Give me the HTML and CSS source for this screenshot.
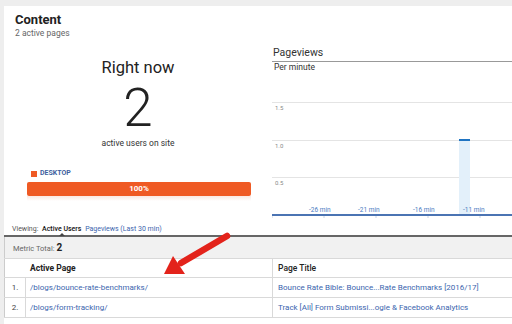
FILE: index.html
```html
<!DOCTYPE html>
<html lang="en">
<head>
    <meta charset="UTF-8">
    <title>Content - Real-Time</title>
    <link rel="stylesheet" href="styles.css">
</head>
<body>

<div class="card">
    <div class="top">
        <!-- Left: right now counter -->
        <div class="left">
            <div class="head">
                <h1>Content</h1>
                <div class="sub">2 active pages</div>
            </div>
            <div class="now">
                <div class="now-title">Right now</div>
                <div class="now-num">2</div>
                <div class="now-cap">active users on site</div>
            </div>
            <div class="device">
                <div class="legend"><span class="swatch"></span>DESKTOP</div>
                <div class="bar">100%</div>
                <div class="bar-shadow"></div>
            </div>
        </div>

        <!-- Right: pageviews chart -->
        <div class="chart">
            <div class="chart-title">Pageviews</div>
            <div class="chart-sub">Per minute</div>
            <svg class="plot" width="240" height="144" viewBox="0 0 240 144">
                <line x1="0" y1="25.5" x2="240" y2="25.5" stroke="#e4e4e4"/>
                <line x1="0" y1="63.5" x2="240" y2="63.5" stroke="#e4e4e4"/>
                <line x1="0" y1="100.5" x2="240" y2="100.5" stroke="#e4e4e4"/>
                <text x="3" y="33" class="ylab">1.5</text>
                <text x="3" y="71" class="ylab">1.0</text>
                <text x="3" y="108" class="ylab">0.5</text>
                <rect x="187" y="62" width="11" height="77" fill="#e3f0fa"/>
                <rect x="187" y="62" width="11" height="2" fill="#1f74c2"/>
                <rect x="0" y="137" width="240" height="2" fill="#4b74b3"/>
                <path d="M0 139v2M52 139v2M104 139v2M156 139v2M208 139v2" stroke="#c8d4e6"/>
                <text x="37" y="135" class="xlab">-26 min</text>
                <text x="86" y="135" class="xlab">-21 min</text>
                <text x="141" y="135" class="xlab">-16 min</text>
                <text x="191" y="135" class="xlab">-11 min</text>
            </svg>
        </div>
    </div>

    <div class="viewing">
        <span class="muted">Viewing:</span>
        <span class="active">Active Users</span>
        <span class="link">Pageviews (Last 30 min)</span>
    </div>

    <table class="pages">
        <tr class="total">
            <td colspan="3">Metric Total: <b>2</b></td>
        </tr>
        <tr class="th">
            <td class="idx"></td>
            <td class="page">Active Page</td>
            <td class="title">Page Title</td>
        </tr>
        <tr>
            <td class="idx">1.</td>
            <td class="page"><span class="link">/blogs/bounce-rate-benchmarks/</span></td>
            <td class="title"><span class="link">Bounce Rate Bible: Bounce...Rate Benchmarks [2016/17]</span></td>
        </tr>
        <tr>
            <td class="idx">2.</td>
            <td class="page"><span class="link">/blogs/form-tracking/</span></td>
            <td class="title"><span class="link">Track [All] Form Submissi...ogle &amp; Facebook Analytics</span></td>
        </tr>
    </table>

    <!-- annotation arrow -->
    <svg class="arrow" width="90" height="60" viewBox="150 222 90 60">
        <line x1="227" y1="236" x2="181" y2="263" stroke="#e3231b" stroke-width="6.5" stroke-linecap="round"/>
        <polygon points="164,274 173,256 185,274" fill="#e3231b"/>
    </svg>
</div>

</body>
</html>
```

FILE: styles.css
```css
body {
    margin: 0;
    background: #eeeeee;
    font-family: Roboto, "Liberation Sans", sans-serif;
    color: #222;
}
.card {
    position: relative;
    margin: 6px 0 0 4px;
    height: 318px;
    background: #fff;
    overflow: hidden;
}
.top {
    display: flex;
    height: 214px;
}
.left {
    width: 268px;
}
.head {
    padding: 6px 11px 0;
}
h1 {
    margin: 0;
    font-size: 13px;
    line-height: 16px;
    font-weight: 700;
}
.sub {
    font-size: 8.5px;
    color: #666;
    line-height: 11px;
}
.now {
    text-align: center;
    padding-top: 18px;
}
.now-title {
    font-size: 16.5px;
    font-weight: 400;
    line-height: 22px;
}
.now-num {
    font-size: 53px;
    font-weight: 300;
    line-height: 50px;
    margin-top: 4px;
}
.now-cap {
    font-size: 8.5px;
    line-height: 12px;
    color: #333;
    margin-top: 4px;
}
.device {
    padding: 20px 21px 0 23px;
}
.legend {
    font-size: 7px;
    font-weight: 700;
    color: #3e5f9e;
    line-height: 9px;
    display: flex;
    align-items: center;
}
.swatch {
    width: 6px;
    height: 6px;
    background: #ef5a24;
    margin: 0 3px 0 4px;
}
.bar {
    margin-top: 4px;
    height: 14px;
    line-height: 14px;
    background: #ef5a24;
    border-radius: 2px;
    color: #fff;
    font-size: 8px;
    font-weight: 700;
    text-align: center;
}
.bar-shadow {
    height: 5px;
    background: linear-gradient(#f6d9cf, #fff);
    opacity: 0.6;
}
.chart {
    flex: 1;
    padding-top: 40px;
}
.chart-title {
    font-size: 10.5px;
    line-height: 14px;
    color: #333;
    padding-left: 1px;
    border-bottom: 1px solid #999;
    padding-bottom: 1px;
}
.chart-sub {
    font-size: 8.5px;
    line-height: 11px;
    color: #333;
    padding-left: 2px;
}
.plot {
    display: block;
    margin-top: 4px;
}
.ylab {
    font-size: 6px;
    fill: #888;
}
.xlab {
    font-size: 6.5px;
    fill: #4a7bc2;
}
.viewing {
    padding: 4px 0 0 8px;
    font-size: 7px;
    line-height: 10px;
    height: 11px;
}
.muted {
    color: #555;
}
.active {
    position: relative;
    color: #111;
    font-weight: 500;
    margin: 0 2px;
}
.active::after {
    content: "";
    position: absolute;
    left: 50%;
    bottom: -3px;
    margin-left: -3px;
    border: 3px solid transparent;
    border-bottom-color: #444;
    border-top: 0;
}
.link {
    color: #3b65ae;
}
.pages {
    width: 100%;
    border-collapse: collapse;
    border-top: 2px solid #666;
    border-left: 1px solid #ccc;
    font-size: 8px;
}
.pages td {
    padding: 0;
    border-bottom: 1px solid #d9d9d9;
}
.total td {
    height: 21px;
    background: #f1f1f1;
    padding-left: 8px;
    color: #666;
    font-size: 7.5px;
}
.total b {
    color: #222;
    font-size: 10px;
}
.th td {
    height: 18px;
    font-weight: 700;
    font-size: 8.5px;
}
.idx {
    width: 20px;
    text-align: center;
    color: #444;
}
.pages tr:not(.th):not(.total) td {
    height: 19px;
}
.pages tr:not(.total) .page {
    width: 242px;
    padding-left: 4px;
    border-left: 1px solid #d9d9d9;
    border-right: 1px solid #d9d9d9;
}
.th .page {
    border-left-color: transparent !important;
}
.title {
    padding-left: 5px !important;
}
.th .title {
    font-weight: 500;
}
.arrow {
    position: absolute;
    left: 146px;
    top: 216px;
}
```
